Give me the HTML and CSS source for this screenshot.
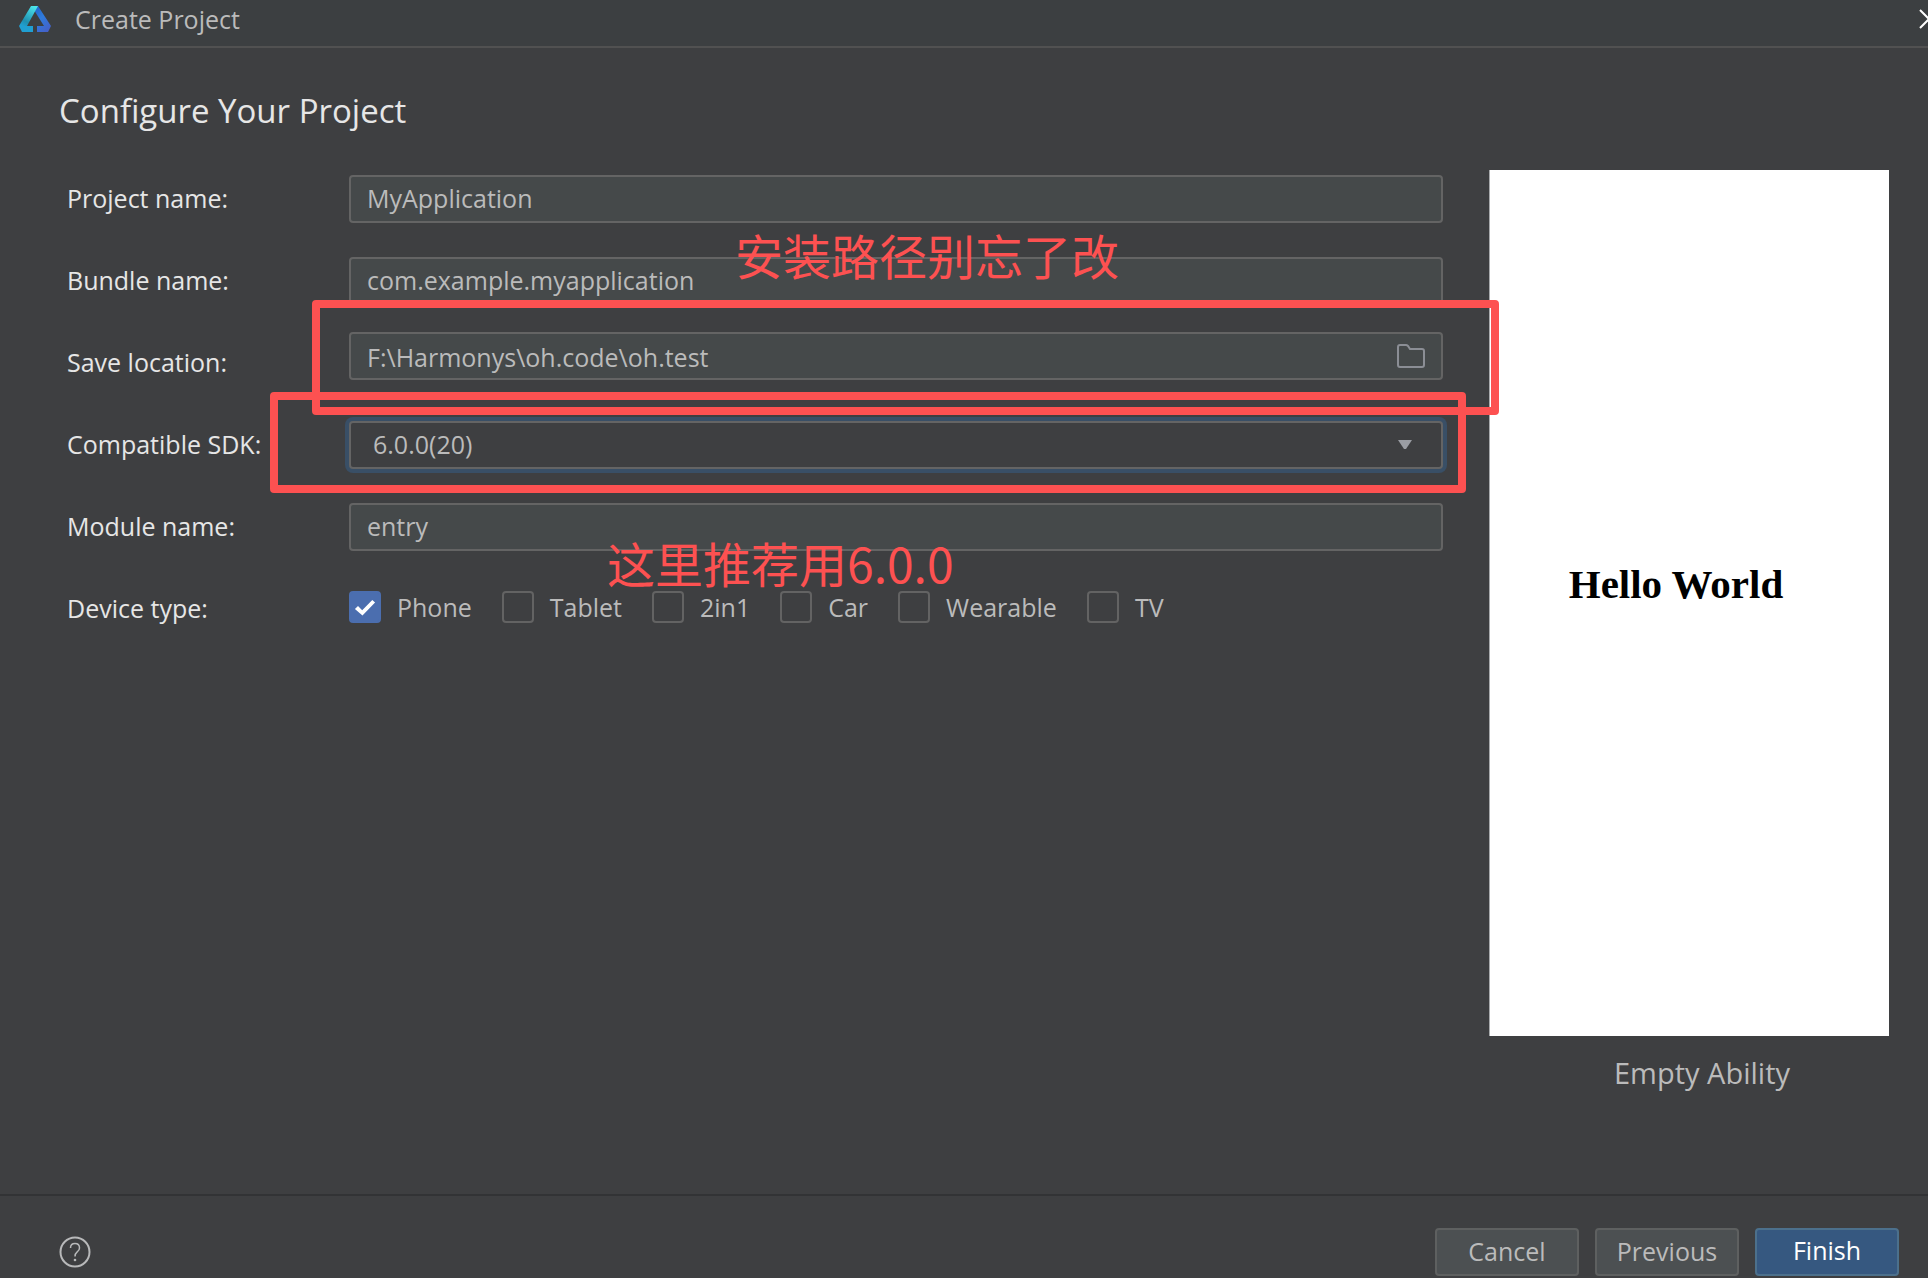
FILE: index.html
```html
<!DOCTYPE html>
<html lang="en">
<head>
<meta charset="utf-8">
<title>Create Project</title>
<link rel="stylesheet" href="styles.css">
</head>
<body>
<header class="titlebar">
  <svg class="logo" viewBox="0 0 32 26" aria-hidden="true">
    <defs>
      <linearGradient id="teal" x1="0.7" y1="0" x2="0.2" y2="1"><stop offset="0" stop-color="#4be3ea"/><stop offset="0.75" stop-color="#1e8fb0"/><stop offset="1" stop-color="#209fd2"/></linearGradient>
      <linearGradient id="blue" x1="0.1" y1="0" x2="0.8" y2="1"><stop offset="0" stop-color="#1f62c8"/><stop offset="0.5" stop-color="#2f7bdc"/><stop offset="1" stop-color="#4560c8"/></linearGradient>
    </defs>
    <path fill="url(#blue)" d="M12 0h7l13 20-3 6H18v-6h7L15 4z"/>
    <path fill="url(#teal)" d="M12 0h7L8 20H0z"/>
    <path fill="#209fd2" d="M0 20h14v6H3z"/>
  </svg>
  <span class="titlebar-text">Create Project</span>
  <button class="close" type="button" aria-label="Close">
    <svg viewBox="0 0 20 20" aria-hidden="true"><path d="M1 1l18 18M19 1L1 19" fill="none" stroke="#fff" stroke-width="2"/></svg>
  </button>
</header>
<main class="content">
  <h1 class="heading">Configure Your Project</h1>
  <div class="columns">
    <form class="form">
      <div class="row">
        <label class="label" for="project">Project name:</label>
        <div class="control"><input class="field" id="project" type="text" value="MyApplication"></div>
      </div>
      <div class="row">
        <label class="label" for="bundle">Bundle name:</label>
        <div class="control"><input class="field" id="bundle" type="text" value="com.example.myapplication">
          <span class="note note-path">安装路径别忘了改</span></div>
      </div>
      <div class="row">
        <label class="label" for="location">Save location:</label>
        <div class="control control-raised"><input class="field field-low" id="location" type="text" value="F:\Harmonys\oh.code\oh.test">
          <button class="browse" type="button" aria-label="Browse">
            <svg viewBox="0 0 28 24" aria-hidden="true"><path d="M3 1h6q1 0 2 1l2 3h12q2 0 2 2v14q0 2-2 2H3q-2 0-2-2V3q0-2 2-2z" fill="none" stroke="#8b8e95" stroke-width="2"/></svg>
          </button>
          <span class="mark mark-location"></span></div>
      </div>
      <div class="row">
        <label class="label" for="sdk">Compatible SDK:</label>
        <div class="control"><select class="field select" id="sdk"><option>6.0.0(20)</option></select>
          <svg class="arrow" viewBox="0 0 14 9" aria-hidden="true"><path d="M0 0h14L8 9H6z" fill="#9a9da3"/></svg>
          <span class="mark mark-sdk"></span></div>
      </div>
      <div class="row">
        <label class="label" for="module">Module name:</label>
        <div class="control"><input class="field" id="module" type="text" value="entry">
          <span class="note note-sdk">这里推荐用6.0.0</span></div>
      </div>
      <div class="row" role="group" aria-labelledby="device">
        <span class="label" id="device">Device type:</span>
        <div class="devices">
          <label class="device"><input class="check" type="checkbox" checked>Phone</label>
          <label class="device"><input class="check" type="checkbox">Tablet</label>
          <label class="device"><input class="check" type="checkbox">2in1</label>
          <label class="device"><input class="check" type="checkbox">Car</label>
          <label class="device"><input class="check" type="checkbox">Wearable</label>
          <label class="device"><input class="check" type="checkbox">TV</label>
        </div>
      </div>
    </form>
    <figure class="preview">
      <div class="screen">Hello World</div>
      <figcaption class="caption">Empty Ability</figcaption>
    </figure>
  </div>
</main>
<footer class="footer">
  <button class="help" type="button" aria-label="Help">
    <svg viewBox="0 0 32 32" aria-hidden="true"><g fill="none" stroke="#b8b9ba"><circle cx="16" cy="16" r="14.5" stroke-width="2"/><path d="M11.5 12q0-4.500 4.500-4.500t4.500 4.500q0 2.200-2.300 3.800Q16 17.500 16 20.500" stroke-width="1.500"/></g><circle cx="16" cy="24" r="1.300" fill="#b8b9ba"/></svg>
  </button>
  <div class="actions">
    <button class="button" type="button">Cancel</button>
    <button class="button" type="button">Previous</button>
    <button class="button button-primary" type="button">Finish</button>
  </div>
</footer>
</body>
</html>
```
FILE: styles.css
```css
*, *::before, *::after { box-sizing: border-box; }

body {
  margin: 0;
  min-height: 100vh;
  display: flex;
  flex-direction: column;
  overflow-x: hidden;
  background: #3e3f41;
  color: #bbb;
  font: 25px/32px "Open Sans", "Noto Sans", "Noto Sans CJK SC", sans-serif;
}

button, input, select { font: inherit; color: inherit; }
svg { display: block; }

.titlebar {
  display: flex;
  align-items: center;
  height: 48px;
  padding: 0 0 8px 19px;
  overflow: hidden;
  background: #3c3f41;
  border-bottom: 2px solid #515151;
}
.logo { width: 32px; height: 26px; }
.titlebar-text { margin-left: 24px; }
.close {
  width: 20px;
  height: 20px;
  margin: 0 -11px 0 auto;
  padding: 0;
  border: 0;
  background: none;
}

.content {
  flex: 1;
  display: flex;
  flex-direction: column;
  padding: 39px 39px 100px 59px;
}
.heading {
  margin: 0 0 35px;
  color: #e6e6e6;
  font-size: 33px;
  font-weight: 400;
  line-height: 48px;
}
.columns {
  flex: 1;
  display: grid;
  grid-template-columns: 1fr 400px;
  gap: 46px;
}

.form {
  display: flex;
  flex-direction: column;
  gap: 34px;
  padding: 5px 0 0 8px;
}
.row {
  display: grid;
  grid-template: 48px / 282px 1fr;
  align-items: center;
}
.label {
  padding-bottom: 2px;
  color: #e6e6e6;
}
.control { position: relative; }
.control-raised { margin-bottom: 14px; }
.field {
  display: block;
  width: 100%;
  height: 48px;
  padding: 0 16px 2px;
  border: 2px solid #646464;
  border-radius: 4px;
  outline: 0;
  background: #45494a;
}
.field-low { padding-top: 4px; }
.select {
  padding-left: 22px;
  appearance: none;
  background: #3e3f41;
  box-shadow: 0 0 0 4px #394f66;
}
.arrow {
  position: absolute;
  top: 19px;
  right: 31px;
  width: 14px;
  height: 9px;
  pointer-events: none;
}
.browse {
  position: absolute;
  top: 12px;
  right: 18px;
  width: 28px;
  height: 24px;
  padding: 0;
  border: 0;
  background: none;
}

.mark {
  position: absolute;
  z-index: 1;
  border: 8px solid #fd5151;
  border-radius: 4px;
  pointer-events: none;
}
.mark-location { inset: -32px -56px -35px -37px; }
.mark-sdk { inset: -29px -23px -24px -79px; }
.note {
  position: absolute;
  z-index: 1;
  color: #fd5151;
  font: 48px/48px "Noto Sans CJK SC", sans-serif;
  white-space: nowrap;
  pointer-events: none;
}
.note-path { left: 386px; top: -27px; }
.note-sdk { left: 258px; top: 35px; }

.devices {
  display: flex;
  gap: 30px;
  padding-bottom: 4px;
}
.device { display: flex; align-items: center; gap: 16px; }
.check {
  width: 32px;
  height: 32px;
  margin: 0;
  appearance: none;
  border: 2px solid #636363;
  border-radius: 4px;
}
.check:checked {
  border-color: #4b6eaf;
  background: #4b6eaf;
}
.check:checked::before {
  content: "";
  display: block;
  width: 28px;
  height: 28px;
  background: #fff;
  clip-path: polygon(14% 57%, 25% 46%, 40% 62%, 76% 25%, 86% 34%, 41% 80%);
}

.preview {
  display: flex;
  flex-direction: column;
  margin: 0;
}
.screen {
  flex: 1;
  display: flex;
  align-items: center;
  justify-content: center;
  padding: 0 27px 38px 0;
  border-left: 1px solid #a9abad;
  background: #fff;
  color: #000;
  font: bold 41px/48px "Liberation Serif", serif;
}
.caption {
  margin-top: 16px;
  padding-left: 26px;
  font-size: 29px;
  line-height: 42px;
  text-align: center;
}

.footer {
  display: flex;
  align-items: flex-end;
  justify-content: space-between;
  height: 84px;
  padding: 0 29px 2px 59px;
  border-top: 2px solid #323335;
}
.help {
  width: 32px;
  height: 32px;
  margin-bottom: 8px;
  padding: 0;
  border: 0;
  background: none;
}
.actions { display: flex; gap: 16px; }
.button {
  width: 144px;
  height: 48px;
  padding: 0 0 2px;
  border: 2px solid #5e6060;
  border-radius: 4px;
  background: #4c5052;
}
.button-primary {
  padding-bottom: 4px;
  border-color: #4c708c;
  background: #365880;
  color: #fff;
}
```
